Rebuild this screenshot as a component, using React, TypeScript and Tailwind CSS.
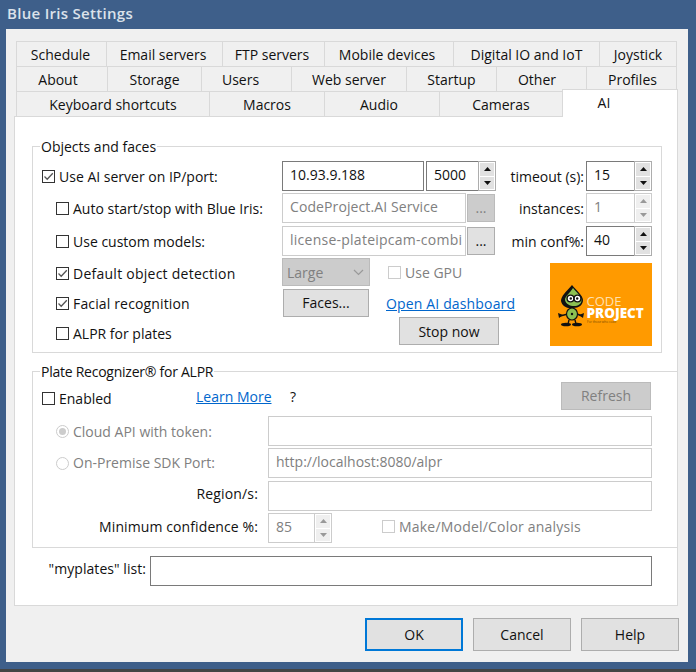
import React from "react";

const Check = ({ on = false, off = false }: { on?: boolean; off?: boolean }) => (
  <span className={`flex h-[13px] w-[13px] shrink-0 items-center justify-center border ${off ? "border-[#cccccc]" : "border-[#333333]"} bg-white`}>
    {on && (
      <svg width="11" height="11" viewBox="0 0 11 11">
        <path d="M1.5 5.5 L4.2 8.2 L9.8 2.2" fill="none" stroke="#555555" strokeWidth="1.3" />
      </svg>
    )}
  </span>
);

const CheckRow = ({ label, on, left = 23, cls = "", text = "" }: { label: string; on?: boolean; left?: 9 | 23; cls?: string; text?: string }) => (
  <div className={`flex items-center gap-[4px] ${left === 9 ? "pl-[9px]" : "pl-[23px]"} ${cls}`}>
    <Check on={on} />
    <span className={`pt-[2px] ${text}`}>{label}</span>
  </div>
);

const Radio = ({ on = false }: { on?: boolean }) => (
  <span className="flex h-[13px] w-[13px] shrink-0 items-center justify-center rounded-full border border-[#cccccc] bg-white">
    {on && <span className="h-[7px] w-[7px] rounded-full bg-[#cccccc]" />}
  </span>
);

const Arrow = ({ up, off }: { up?: boolean; off?: boolean }) => (
  <svg width="7" height="4" viewBox="0 0 7 4">
    <path d={up ? "M0 4 L3.5 0 L7 4 Z" : "M0 0 L3.5 4 L7 0 Z"} fill={off ? "#999999" : "#111111"} />
  </svg>
);

const Spin = ({ value, width, off }: { value: string; width: string; off?: boolean }) => (
  <div className={`flex h-[30px] ${width} shrink-0 border ${off ? "border-[#cccccc] text-[#808080]" : "border-[#7a7a7a]"} bg-white`}>
    <span className="flex-1 pl-[7px] leading-[25px]">{value}</span>
    <div className={`-my-px -mr-px flex w-[18px] flex-col gap-px border p-px ${off ? "border-[#cccccc] bg-white" : "border-[#adadad] bg-white"}`}>
      <span className={`flex flex-1 items-center justify-center ${off ? "bg-[#efefef]" : "bg-[#e1e1e1]"}`}><Arrow up off={off} /></span>
      <span className={`flex flex-1 items-center justify-center ${off ? "bg-[#efefef]" : "bg-[#e1e1e1]"}`}><Arrow off={off} /></span>
    </div>
  </div>
);

const Field = ({ value, width, off, text = "" }: { value?: string; width: string; off?: boolean; text?: string }) => (
  <div className={`h-[30px] ${width} shrink-0 border ${off ? "border-[#cccccc] text-[#808080]" : "border-[#7a7a7a]"} overflow-hidden whitespace-nowrap bg-white pl-[7px] leading-[25px] ${text}`}>
    {value}
  </div>
);

const Btn = ({ label, cls }: { label: string; cls: string }) => (
  <div className={`flex shrink-0 items-center justify-center border ${cls}`}>{label}</div>
);

const Tab = ({ label, width, last, shift = "" }: { label: string; width: string; first?: boolean; last?: boolean; shift?: string }) => (
  <div className={`flex h-[25px] ${width} shrink-0 items-center justify-center border-t border-l border-[#d9d9d9] bg-[#f0f0f0] pt-[2px] ${shift} ${last ? "border-r" : ""}`}>
    {label}
  </div>
);

const Logo = () => (
  <svg width="102" height="83" viewBox="0 0 102 83" className="mt-[5px] block shrink-0">
    <rect width="102" height="83" fill="#ff9a00" />
    <path d="M10 53 L18 51 M27 51 L32 53" stroke="#111" strokeWidth="1.4" fill="none" />
    <path d="M8 50 L9 55 L13 52 Z M34 50 L33 55 L29 52 Z" fill="#111" />
    <path d="M22 22 C16 29 11 33 11 38 C12 43 17 46 23 45 C29 45 33 42 33 37 C33 33 27 28 22 22 Z" fill="#111111" />
    <path d="M23 25 C20 30 15 33 15 37 C16 41 20 43 24 43 C28 43 31.500 41 31.500 37 C31.500 33 26 29 23 25 Z" fill="#8cc152" />
    <circle cx="20.500" cy="35.500" r="3.400" fill="#fff" stroke="#111" strokeWidth="1.400" />
    <circle cx="27.500" cy="35.500" r="3.400" fill="#fff" stroke="#111" strokeWidth="1.400" />
    <circle cx="20.800" cy="35.500" r="1.200" fill="#111" />
    <circle cx="27.200" cy="35.500" r="1.200" fill="#111" />
    <ellipse cx="22" cy="51" rx="5.500" ry="6" fill="#8cc152" stroke="#111" strokeWidth="1.200" />
    <circle cx="22" cy="51" r="1.200" fill="#111" />
    <path d="M19 57 L18 61 M25 57 L26 61" stroke="#111" strokeWidth="1.400" />
    <ellipse cx="16" cy="61.500" rx="5" ry="1.800" fill="#111" />
    <ellipse cx="27" cy="61.500" rx="5" ry="1.800" fill="#111" />
    <text x="36.500" y="43" fontSize="13" fill="#ffe0b0" fontFamily="Open Sans, sans-serif">CODE</text>
    <text x="36.500" y="55" fontSize="13.500" fontWeight="800" fill="#ffffff" fontFamily="Open Sans, sans-serif">PROJECT</text>
    <text x="37" y="60" fontSize="3.200" fill="#7a4a00" fontFamily="Open Sans, sans-serif">For those who code</text>
  </svg>
);

export default function App() {
  return (
    <div className="flex h-[672px] w-[696px] flex-col overflow-hidden bg-[#3e5f8a] font-['Open_Sans',sans-serif] text-[14px] leading-[20px] text-[#111111]">
      <div className="h-[29px] shrink-0 pl-[7px] pt-[3px] text-[15px] font-semibold tracking-[0.3px] text-[#dbe2ea]">Blue Iris Settings</div>

      <div className="ml-[6px] h-[633px] w-[682px] shrink-0 bg-[#f0f0f0] pt-[12px]">
        <div className="ml-[10px] flex">
          <Tab first label="Schedule" width="w-[90px]" shift="pr-[2px]" />
          <Tab label="Email servers" width="w-[116px]" shift="pr-[3px]" />
          <Tab label="FTP servers" width="w-[102px]" shift="pr-[3px]" />
          <Tab label="Mobile devices" width="w-[129px]" shift="pr-[4px]" />
          <Tab label="Digital IO and IoT" width="w-[146px]" />
          <Tab last label="Joystick" width="w-[78px]" />
        </div>
        <div className="ml-[10px] flex">
          <Tab first label="About" width="w-[91px]" shift="pr-[8px]" />
          <Tab label="Storage" width="w-[94px]" />
          <Tab label="Users" width="w-[90px]" shift="pr-[12px]" />
          <Tab label="Web server" width="w-[115px]" />
          <Tab label="Startup" width="w-[90px]" />
          <Tab label="Other" width="w-[90px]" shift="pr-[9px]" />
          <Tab last label="Profiles" width="w-[91px]" shift="pl-[2px]" />
        </div>
        <div className="ml-[10px] flex h-[25px] items-start">
          <Tab first label="Keyboard shortcuts" width="w-[193px]" />
          <Tab label="Macros" width="w-[115px]" />
          <Tab label="Audio" width="w-[115px]" shift="pr-[6px]" />
          <Tab label="Cameras" width="w-[123px]" />
          <div className="relative z-10 -mt-[2px] flex h-[28px] w-[116px] shrink-0 items-center justify-center border-x border-t border-[#d9d9d9] bg-white pb-[2px] pr-[32px]">AI</div>
        </div>

        <div className="ml-[8px] h-[490px] w-[664px] border border-[#d9d9d9] bg-white pt-[29px]">
          {/* Objects and faces */}
          <div className="relative ml-[17px] h-[207px] w-[630px] border border-[#d9d9d9] pt-[14px]">
            <span className="absolute -top-[10px] left-[7px] bg-white px-px">Objects and faces</span>
            <div className="flex h-[30px] items-center">
              <CheckRow left={9} on label="Use AI server on IP/port:" cls="w-[249px] shrink-0" />
              <Field value="10.93.9.188" width="w-[142px]" />
              <div className="ml-[2px]"><Spin value="5000" width="w-[70px]" /></div>
              <span className="w-[88px] shrink-0 pt-[2px] text-right">timeout (s):</span>
              <div className="ml-[2px]"><Spin value="15" width="w-[66px]" /></div>
            </div>
            <div className="mt-[2px] flex h-[30px] items-center">
              <CheckRow label="Auto start/stop with Blue Iris:" cls="w-[249px] shrink-0" />
              <Field off value="CodeProject.AI Service" width="w-[184px]" text="tracking-[0.1px]" />
              <Btn label="..." cls="ml-px h-[28px] w-[28px] border-[#bbbbbb] bg-[#cccccc] text-[#808080]" />
              <span className="w-[89px] shrink-0 pt-[2px] text-right">instances:</span>
              <div className="ml-[2px]"><Spin off value="1" width="w-[66px]" /></div>
            </div>
            <div className="mt-[3px] flex h-[30px] items-center">
              <CheckRow label="Use custom models:" cls="w-[249px] shrink-0" />
              <Field off value="license-plateipcam-combi" width="w-[184px]" text="tracking-[0.25px]" />
              <Btn label="..." cls="ml-px h-[28px] w-[28px] border-[#adadad] bg-[#e1e1e1]" />
              <span className="w-[89px] shrink-0 pt-[2px] text-right">min conf%:</span>
              <div className="ml-[2px]"><Spin value="40" width="w-[66px]" /></div>
            </div>

            <div className="mt-[2px] flex">
              <div className="w-[249px] shrink-0">
                <CheckRow on label="Default object detection" cls="h-[30px]" text="tracking-[0.25px]" />
                <CheckRow on label="Facial recognition" cls="h-[30px]" text="tracking-[0.15px]" />
                <CheckRow label="ALPR for plates" cls="h-[30px]" />
              </div>
              <div className="w-[268px] shrink-0">
                <div className="flex h-[28px] items-center">
                  <div className="flex h-[28px] w-[88px] items-center justify-between border border-[#bbbbbb] bg-[#cccccc] pl-[4px] pr-[5px] text-[#808080]">
                    <span className="pt-[2px]">Large</span>
                    <svg width="11" height="7" viewBox="0 0 11 7">
                      <path d="M1 1 L5.500 5.500 L10 1" fill="none" stroke="#999999" strokeWidth="1.200" />
                    </svg>
                  </div>
                  <div className="ml-[18px] flex items-center gap-[4px] text-[#808080]">
                    <Check off />
                    <span className="pt-[2px]">Use GPU</span>
                  </div>
                </div>
                <div className="mt-[3px] flex h-[28px] items-center">
                  <Btn label="Faces..." cls="ml-px h-[28px] w-[86px] border-[#adadad] bg-[#e1e1e1]" />
                  <span className="ml-[17px] pt-[2px] tracking-[0.15px] text-[#0066cc] underline">Open AI dashboard</span>
                </div>
                <Btn label="Stop now" cls="ml-[117px] h-[28px] w-[100px] border-[#adadad] bg-[#e1e1e1] pt-[2px]" />
              </div>
              <Logo />
            </div>
          </div>

          {/* Plate Recognizer */}
          <div className="relative ml-[17px] mt-[18px] h-[177px] w-[645px] border-y border-l border-[#d9d9d9] pt-[10px]">
            <span className="absolute -top-[10px] left-[7px] bg-white px-px tracking-[-0.25px]">Plate Recognizer® for ALPR</span>
            <div className="flex h-[28px] items-center">
              <CheckRow left={9} label="Enabled" cls="w-[163px] shrink-0 pt-[4px]" />
              <span className="w-[94px] shrink-0 pt-[2px] text-[#0066cc]"><span className="underline">Learn More</span></span>
              <span className="w-[271px] shrink-0 pt-[1px]">?</span>
              <Btn label="Refresh" cls="h-[28px] w-[90px] border-[#bbbbbb] bg-[#cccccc] text-[#808080]" />
            </div>
            <div className="mt-[6px] flex h-[30px] items-center">
              <div className="flex w-[235px] shrink-0 items-center gap-[4px] pl-[23px] text-[#808080]">
                <Radio on />
                <span className="pt-[2px]">Cloud API with token:</span>
              </div>
              <Field off width="w-[384px]" />
            </div>
            <div className="mt-[2px] flex h-[30px] items-center">
              <div className="flex w-[235px] shrink-0 items-center gap-[4px] pl-[23px] text-[#808080]">
                <Radio />
                <span>On-Premise SDK Port:</span>
              </div>
              <Field off value="http://localhost:8080/alpr" width="w-[384px]" />
            </div>
            <div className="mt-[3px] flex h-[30px] items-center">
              <span className="mr-[10px] w-[225px] shrink-0 pb-[4px] text-right tracking-[0.15px]">Region/s:</span>
              <Field off width="w-[384px]" />
            </div>
            <div className="mt-[2px] flex h-[30px] items-center">
              <span className="mr-[10px] w-[225px] shrink-0 pb-[2px] text-right tracking-[0.1px]">Minimum confidence %:</span>
              <Spin off value="85" width="w-[64px]" />
              <div className="ml-[50px] flex items-center gap-[4px] pb-[4px] text-[#808080]">
                <Check off />
                <span className="pt-[2px] tracking-[0.2px]">Make/Model/Color analysis</span>
              </div>
            </div>
          </div>

          <div className="mt-[8px] flex h-[30px] items-center">
            <span className="mr-[4px] w-[131px] shrink-0 pb-[4px] text-right tracking-[0.05px]">"myplates" list:</span>
            <Field width="w-[502px]" />
          </div>
        </div>

        <div className="ml-[359px] mt-[12px] flex gap-[10px]">
          <Btn label="OK" cls="h-[33px] w-[98px] border-2 border-[#0078d7] bg-[#e1e1e1]" />
          <Btn label="Cancel" cls="h-[33px] w-[98px] border-[#adadad] bg-[#e1e1e1]" />
          <Btn label="Help" cls="h-[33px] w-[98px] border-[#adadad] bg-[#e1e1e1]" />
        </div>
      </div>

      <div className="mt-[7px] h-[3px] shrink-0 bg-[#444444]" />
    </div>
  );
}
